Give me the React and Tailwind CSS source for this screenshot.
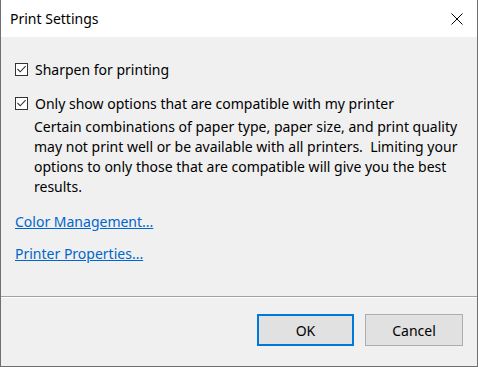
import React from 'react';

const font = { fontFamily: '"Noto Sans", "Open Sans", sans-serif' };

const CheckBox = () => (
  <span className="flex h-[13px] w-[13px] shrink-0 items-center justify-center border border-[#333333] bg-white">
    <svg width="11" height="11" viewBox="0 0 11 11">
      <path d="M1.5 5 L4.2 7.8 L9.6 2.2" fill="none" stroke="#333333" strokeWidth="1.1" />
    </svg>
  </span>
);

const App = () => {
  return (
    <div
      className="flex h-[367px] w-[478px] flex-col border-x border-b border-[#6f6f6f] bg-[#f0f0f0] text-black"
      style={font}
    >
      {/* title bar */}
      <div className="flex h-[37px] shrink-0 items-center justify-between bg-white pl-[9px] pr-[14px]">
        <span className="text-[14px]">Print Settings</span>
        <svg width="12" height="12" viewBox="0 0 12 12">
          <path d="M0.5 0.5 L11.5 11.5 M11.5 0.5 L0.5 11.5" stroke="#000" strokeWidth="1" />
        </svg>
      </div>

      {/* body */}
      <div className="flex h-[259px] shrink-0 flex-col pl-[14px] pt-[22px] text-[14px]">
        <label className="flex h-[20px] items-center gap-[7px]">
          <CheckBox />
          <span>Sharpen for printing</span>
        </label>
        <label className="mt-[14px] flex h-[20px] items-center gap-[7px]">
          <CheckBox />
          <span>Only show options that are compatible with my printer</span>
        </label>
        <p className="mt-[4px] whitespace-pre pl-[19px] leading-[20px]">
          {'Certain combinations of paper type, paper size, and print quality\nmay not print well or be available with all printers.  Limiting your\noptions to only those that are compatible will give you the best\nresults.'}
        </p>
        <a href="#" className="mt-[15px] self-start leading-[20px] text-[#0066cc] underline">
          Color Management...
        </a>
        <a href="#" className="mt-[12px] self-start leading-[20px] text-[#0066cc] underline">
          Printer Properties...
        </a>
      </div>

      {/* separator */}
      <div className="h-px shrink-0 bg-[#a0a0a0]" />
      <div className="h-px shrink-0 bg-white" />

      {/* footer */}
      <div className="flex flex-1 items-start justify-end gap-[11px] pr-[14px] pt-[16px] text-[14px]">
        <button className="h-[32px] w-[97px] border-2 border-[#0078d7] bg-[#e1e1e1]">OK</button>
        <button className="h-[32px] w-[98px] border border-[#adadad] bg-[#e1e1e1]">Cancel</button>
      </div>
    </div>
  );
};

export default App;
